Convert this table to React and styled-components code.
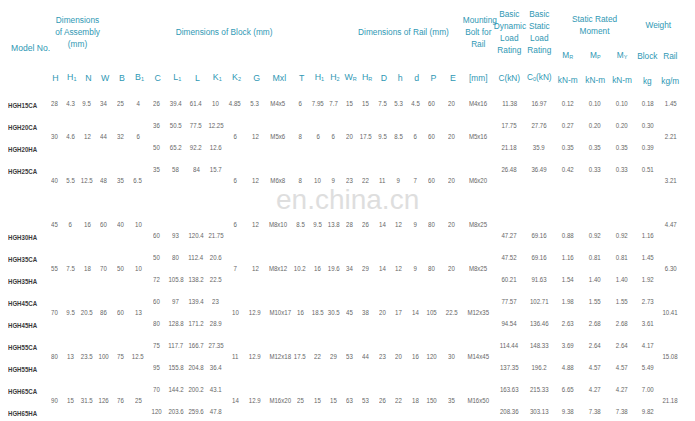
import React from 'react';
import styled, { createGlobalStyle } from 'styled-components';

const GlobalStyle = createGlobalStyle`
  html, body {
    margin: 0;
    padding: 0;
    background: #fff;
  }
`;

// column centres measured from the sheet (model column is 0..46)
const centres = [54, 70, 87, 104, 120, 138, 156, 175, 197, 215, 236, 253, 278, 302, 318, 333, 349, 365, 383, 398, 415, 432, 448, 477, 510, 539, 568, 595, 622, 648, 670];

const widths = (() => {
  const out = [46];
  let left = 46;
  centres.forEach((c, i) => {
    const right = i < centres.length - 1 ? (c + centres[i + 1]) / 2 : 2 * c - left;
    out.push(right - left);
    left = right;
  });
  return out;
})();

const groups = [
  {
    shared: ['28', '4.3', '9.5', '34', '25', '4'],
    mid: ['4.85', '5.3', 'M4x5', '6', '7.95', '7.7', '15', '15', '7.5', '5.3', '4.5', '60', '20', 'M4x16'],
    rail: '1.45',
    rows: [
      { model: 'HGH15CA', block: ['26', '39.4', '61.4', '10'], load: ['11.38', '16.97', '0.12', '0.10', '0.10', '0.18'] },
    ],
  },
  {
    shared: ['30', '4.6', '12', '44', '32', '6'],
    mid: ['6', '12', 'M5x6', '8', '6', '6', '20', '17.5', '9.5', '8.5', '6', '60', '20', 'M5x16'],
    rail: '2.21',
    rows: [
      { model: 'HGH20CA', block: ['36', '50.5', '77.5', '12.25'], load: ['17.75', '27.76', '0.27', '0.20', '0.20', '0.30'] },
      { model: 'HGH20HA', block: ['50', '65.2', '92.2', '12.6'], load: ['21.18', '35.9', '0.35', '0.35', '0.35', '0.39'] },
    ],
  },
  {
    shared: ['40', '5.5', '12.5', '48', '35', '6.5'],
    mid: ['6', '12', 'M6x8', '8', '10', '9', '23', '22', '11', '9', '7', '60', '20', 'M6x20'],
    rail: '3.21',
    rows: [
      { model: 'HGH25CA', block: ['35', '58', '84', '15.7'], load: ['26.48', '36.49', '0.42', '0.33', '0.33', '0.51'] },
      { model: '', block: ['', '', '', ''], load: ['', '', '', '', '', ''] },
    ],
  },
  {
    shared: ['45', '6', '16', '60', '40', '10'],
    mid: ['6', '12', 'M8x10', '8.5', '9.5', '13.8', '28', '26', '14', '12', '9', '80', '20', 'M8x25'],
    rail: '4.47',
    rows: [
      { model: '', block: ['', '', '', ''], load: ['', '', '', '', '', ''] },
      { model: 'HGH30HA', block: ['60', '93', '120.4', '21.75'], load: ['47.27', '69.16', '0.88', '0.92', '0.92', '1.16'] },
    ],
  },
  {
    shared: ['55', '7.5', '18', '70', '50', '10'],
    mid: ['7', '12', 'M8x12', '10.2', '16', '19.6', '34', '29', '14', '12', '9', '80', '20', 'M8x25'],
    rail: '6.30',
    rows: [
      { model: 'HGH35CA', block: ['50', '80', '112.4', '20.6'], load: ['47.52', '69.16', '1.16', '0.81', '0.81', '1.45'] },
      { model: 'HGH35HA', block: ['72', '105.8', '138.2', '22.5'], load: ['60.21', '91.63', '1.54', '1.40', '1.40', '1.92'] },
    ],
  },
  {
    shared: ['70', '9.5', '20.5', '86', '60', '13'],
    mid: ['10', '12.9', 'M10x17', '16', '18.5', '30.5', '45', '38', '20', '17', '14', '105', '22.5', 'M12x35'],
    rail: '10.41',
    rows: [
      { model: 'HGH45CA', block: ['60', '97', '139.4', '23'], load: ['77.57', '102.71', '1.98', '1.55', '1.55', '2.73'] },
      { model: 'HGH45HA', block: ['80', '128.8', '171.2', '28.9'], load: ['94.54', '136.46', '2.63', '2.68', '2.68', '3.61'] },
    ],
  },
  {
    shared: ['80', '13', '23.5', '100', '75', '12.5'],
    mid: ['11', '12.9', 'M12x18', '17.5', '22', '29', '53', '44', '23', '20', '16', '120', '30', 'M14x45'],
    rail: '15.08',
    rows: [
      { model: 'HGH55CA', block: ['75', '117.7', '166.7', '27.35'], load: ['114.44', '148.33', '3.69', '2.64', '2.64', '4.17'] },
      { model: 'HGH55HA', block: ['95', '155.8', '204.8', '36.4'], load: ['137.35', '196.2', '4.88', '4.57', '4.57', '5.49'] },
    ],
  },
  {
    shared: ['90', '15', '31.5', '126', '76', '25'],
    mid: ['14', '12.9', 'M16x20', '25', '15', '15', '63', '53', '26', '22', '18', '150', '35', 'M16x50'],
    rail: '21.18',
    rows: [
      { model: 'HGH65CA', block: ['70', '144.2', '200.2', '43.1'], load: ['163.63', '215.33', '6.65', '4.27', '4.27', '7.00'] },
      { model: 'HGH65HA', block: ['120', '203.6', '259.6', '47.8'], load: ['208.36', '303.13', '9.38', '7.38', '7.38', '9.82'] },
    ],
  },
];

const symbols = [
  ['H'], ['H', '1'], ['N'], ['W'], ['B'], ['B', '1'], ['C'], ['L', '1'], ['L'], ['K', '1'], ['K', '2'],
  ['G'], ['Mxl'], ['T'], ['H', '1'], ['H', '2'], ['W', 'R'], ['H', 'R'], ['D'], ['h'], ['d'], ['P'], ['E'],
];

const Sym = ({ s }) => (
  <>
    {s[0]}
    {s[1] && <sub>{s[1]}</sub>}
  </>
);

const App = () => (
  <>
    <GlobalStyle />
    <Sheet>
      <Table>
        <colgroup>
          {widths.map((w, i) => (
            <Col key={i} $w={w} />
          ))}
        </colgroup>
        <thead>
          <HeadRow $h={49}>
            <ModelHead rowSpan={3}>Model No.</ModelHead>
            <Head colSpan={6} rowSpan={2} $shift={-38}>
              Dimensions<br />of Assembly<br />(mm)
            </Head>
            <Head colSpan={7} rowSpan={2} $shift={11}>Dimensions of Block (mm)</Head>
            <Head colSpan={10} rowSpan={2} $shift={54}>Dimensions of Rail (mm)</Head>
            <Head rowSpan={2}>Mounting<br />Bolt for<br />Rail</Head>
            <Head rowSpan={2}>Basic<br />Dynamic<br />Load<br />Rating</Head>
            <Head rowSpan={2}>Basic<br />Static<br />Load<br />Rating</Head>
            <Head colSpan={3}>Static Rated<br />Moment</Head>
            <Head colSpan={2}>Weight</Head>
          </HeadRow>
          <HeadRow $h={14}>
            <Head>M<sub>R</sub></Head>
            <Head>M<sub>P</sub></Head>
            <Head>M<sub>Y</sub></Head>
            <Head>Block</Head>
            <Head>Rail</Head>
          </HeadRow>
          <HeadRow $h={29}>
            {symbols.map((s, i) => (
              <SymHead key={i}>
                <Sym s={s} />
              </SymHead>
            ))}
            <Head>[mm]</Head>
            <Head>C(kN)</Head>
            <Head>C<sub>0</sub>(kN)</Head>
            <Head $low={5}>kN-m</Head>
            <Head $low={5}>kN-m</Head>
            <Head $low={5}>kN-m</Head>
            <Head $low={7}>kg</Head>
            <Head $low={6}>kg/m</Head>
          </HeadRow>
        </thead>
        <tbody>
          {groups.map((g) =>
            g.rows.map((r, ri) => (
              <DataRow key={g.rail + ri}>
                <Model><ModelName>{r.model}</ModelName></Model>
                {ri === 0 && g.shared.map((v, i) => <Cell key={'s' + i} rowSpan={g.rows.length}><Val>{v}</Val></Cell>)}
                {r.block.map((v, i) => <Cell key={'b' + i}><Val>{v}</Val></Cell>)}
                {ri === 0 && g.mid.map((v, i) => <Cell key={'m' + i} rowSpan={g.rows.length}><Val>{v}</Val></Cell>)}
                {r.load.map((v, i) => <Cell key={'l' + i}><Val>{v}</Val></Cell>)}
                {ri === 0 && <Cell rowSpan={g.rows.length}><Val>{g.rail}</Val></Cell>}
              </DataRow>
            ))
          )}
        </tbody>
      </Table>
      <Watermark>en.china.cn</Watermark>
    </Sheet>
  </>
);

export default App;

const Sheet = styled.div`
  position: relative;
  width: 695px;
  height: 421px;
  overflow: hidden;
`;

const Table = styled.table`
  table-layout: fixed;
  border-collapse: collapse;
  border-spacing: 0;
  width: 681px;
  font-family: "Liberation Sans", Arial, sans-serif;
`;

const Col = styled.col`
  width: ${(p) => p.$w}px;
`;

const HeadRow = styled.tr`
  height: ${(p) => p.$h}px;
`;

const Head = styled.th`
  padding: ${(p) => p.$low || 0}px ${(p) => (p.$shift < 0 ? -p.$shift : 0)}px 0 ${(p) => (p.$shift > 0 ? p.$shift : 0)}px;
  font-size: 8.3px;
  line-height: 12px;
  font-weight: normal;
  color: #2f98b4;
  text-align: center;
  vertical-align: middle;
  white-space: nowrap;
  overflow: visible;

  sub {
    font-size: 5.5px;
    vertical-align: -1px;
  }
`;

const SymHead = styled(Head)`
  padding-left: 3px;
  font-size: 8.8px;
`;

const ModelHead = styled(Head)`
  padding-top: 4px;
  text-align: left;
  padding-left: 11px;
  font-size: 8.6px;
`;

const DataRow = styled.tr`
  height: 22px;
`;

const Cell = styled.td`
  padding: 0;
  font-size: 8px;
  color: #666;
  text-align: center;
  vertical-align: middle;
  white-space: nowrap;
  overflow: visible;
`;

const Val = styled.span`
  display: inline-block;
  transform: scaleX(0.76);
`;

const Model = styled.td`
  padding: 0 0 0 8px;
  vertical-align: middle;
  white-space: nowrap;
`;

const ModelName = styled.span`
  display: inline-block;
  font-size: 7.6px;
  font-weight: bold;
  color: #3a3a3a;
  transform: scaleX(0.8);
  transform-origin: left center;
`;

const Watermark = styled.div`
  position: absolute;
  left: 276px;
  top: 184px;
  font-family: "Liberation Sans", Arial, sans-serif;
  font-size: 28px;
  color: #dedede;
  pointer-events: none;
`;
